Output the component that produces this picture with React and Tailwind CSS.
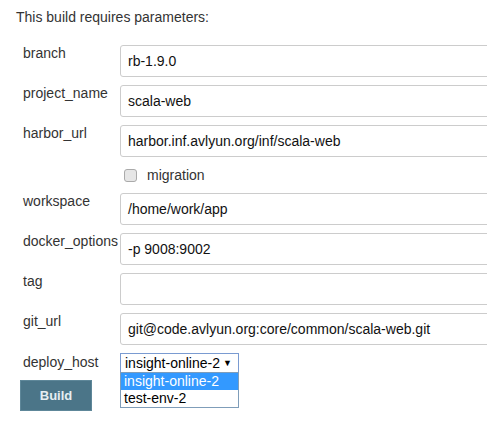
import React from "react";

const fields = [
  { label: "branch", value: "rb-1.9.0" },
  { label: "project_name", value: "scala-web" },
  { label: "harbor_url", value: "harbor.inf.avlyun.org/inf/scala-web" },
];
const fields2 = [
  { label: "workspace", value: "/home/work/app" },
  { label: "docker_options", value: "-p 9008:9002" },
  { label: "tag", value: "" },
  { label: "git_url", value: "git@code.avlyun.org:core/common/scala-web.git" },
];

function Row({ label, value }) {
  return (
    <div className="flex mb-[8px]">
      <div className="w-[97px] shrink-0 leading-[17px] whitespace-nowrap">{label}</div>
      <div className="h-[32px] w-[420px] shrink-0 border border-[#cccccc] rounded-[3px] px-[7px] flex items-center text-[#111] whitespace-nowrap">
        {value}
      </div>
    </div>
  );
}

export default function App() {
  return (
    <div className="w-[487px] h-[424px] overflow-hidden bg-white text-[14px] text-[#333] font-['Liberation_Sans',Arial,sans-serif]">
      <div className="pt-[9px] pl-[16px] leading-[17px]">This build requires parameters:</div>
      <div className="mt-[19px] pl-[23px]">
        {fields.map((f) => (
          <Row key={f.label} {...f} />
        ))}
        <div className="flex items-center h-[20px] mb-[8px] pl-[101px]">
          <div className="w-[13px] h-[13px] rounded-[3px] border border-[#aaaaaa] bg-[#e6e6e6]" />
          <span className="ml-[10px] text-[#333]">migration</span>
        </div>
        {fields2.map((f) => (
          <Row key={f.label} {...f} />
        ))}
        <div className="flex">
          <div className="w-[97px] shrink-0 leading-[17px] pt-[1px]">deploy_host</div>
          <div className="relative">
            <div className="w-[119px] h-[20px] border border-[#7a9bd1] flex items-center pl-[4px] pr-[6px] text-black justify-between">
              <span>insight-online-2</span>
              <span className="text-[9px] leading-none">▼</span>
            </div>
            <div className="absolute left-0 top-[19px] w-[119px] border border-[#7f9db9] bg-white text-black z-10">
              <div className="h-[17px] leading-[17px] pl-[3px] bg-[#3399ff] text-white">insight-online-2</div>
              <div className="h-[17px] leading-[17px] pl-[3px]">test-env-2</div>
            </div>
          </div>
        </div>
        <div className="mt-[7px] -ml-[3px] w-[72px] h-[31px] bg-[#4b7588] border border-[#5e8799] flex items-center justify-center text-[13px] font-bold text-[#e6eef2]">
          Build
        </div>
      </div>
    </div>
  );
}
